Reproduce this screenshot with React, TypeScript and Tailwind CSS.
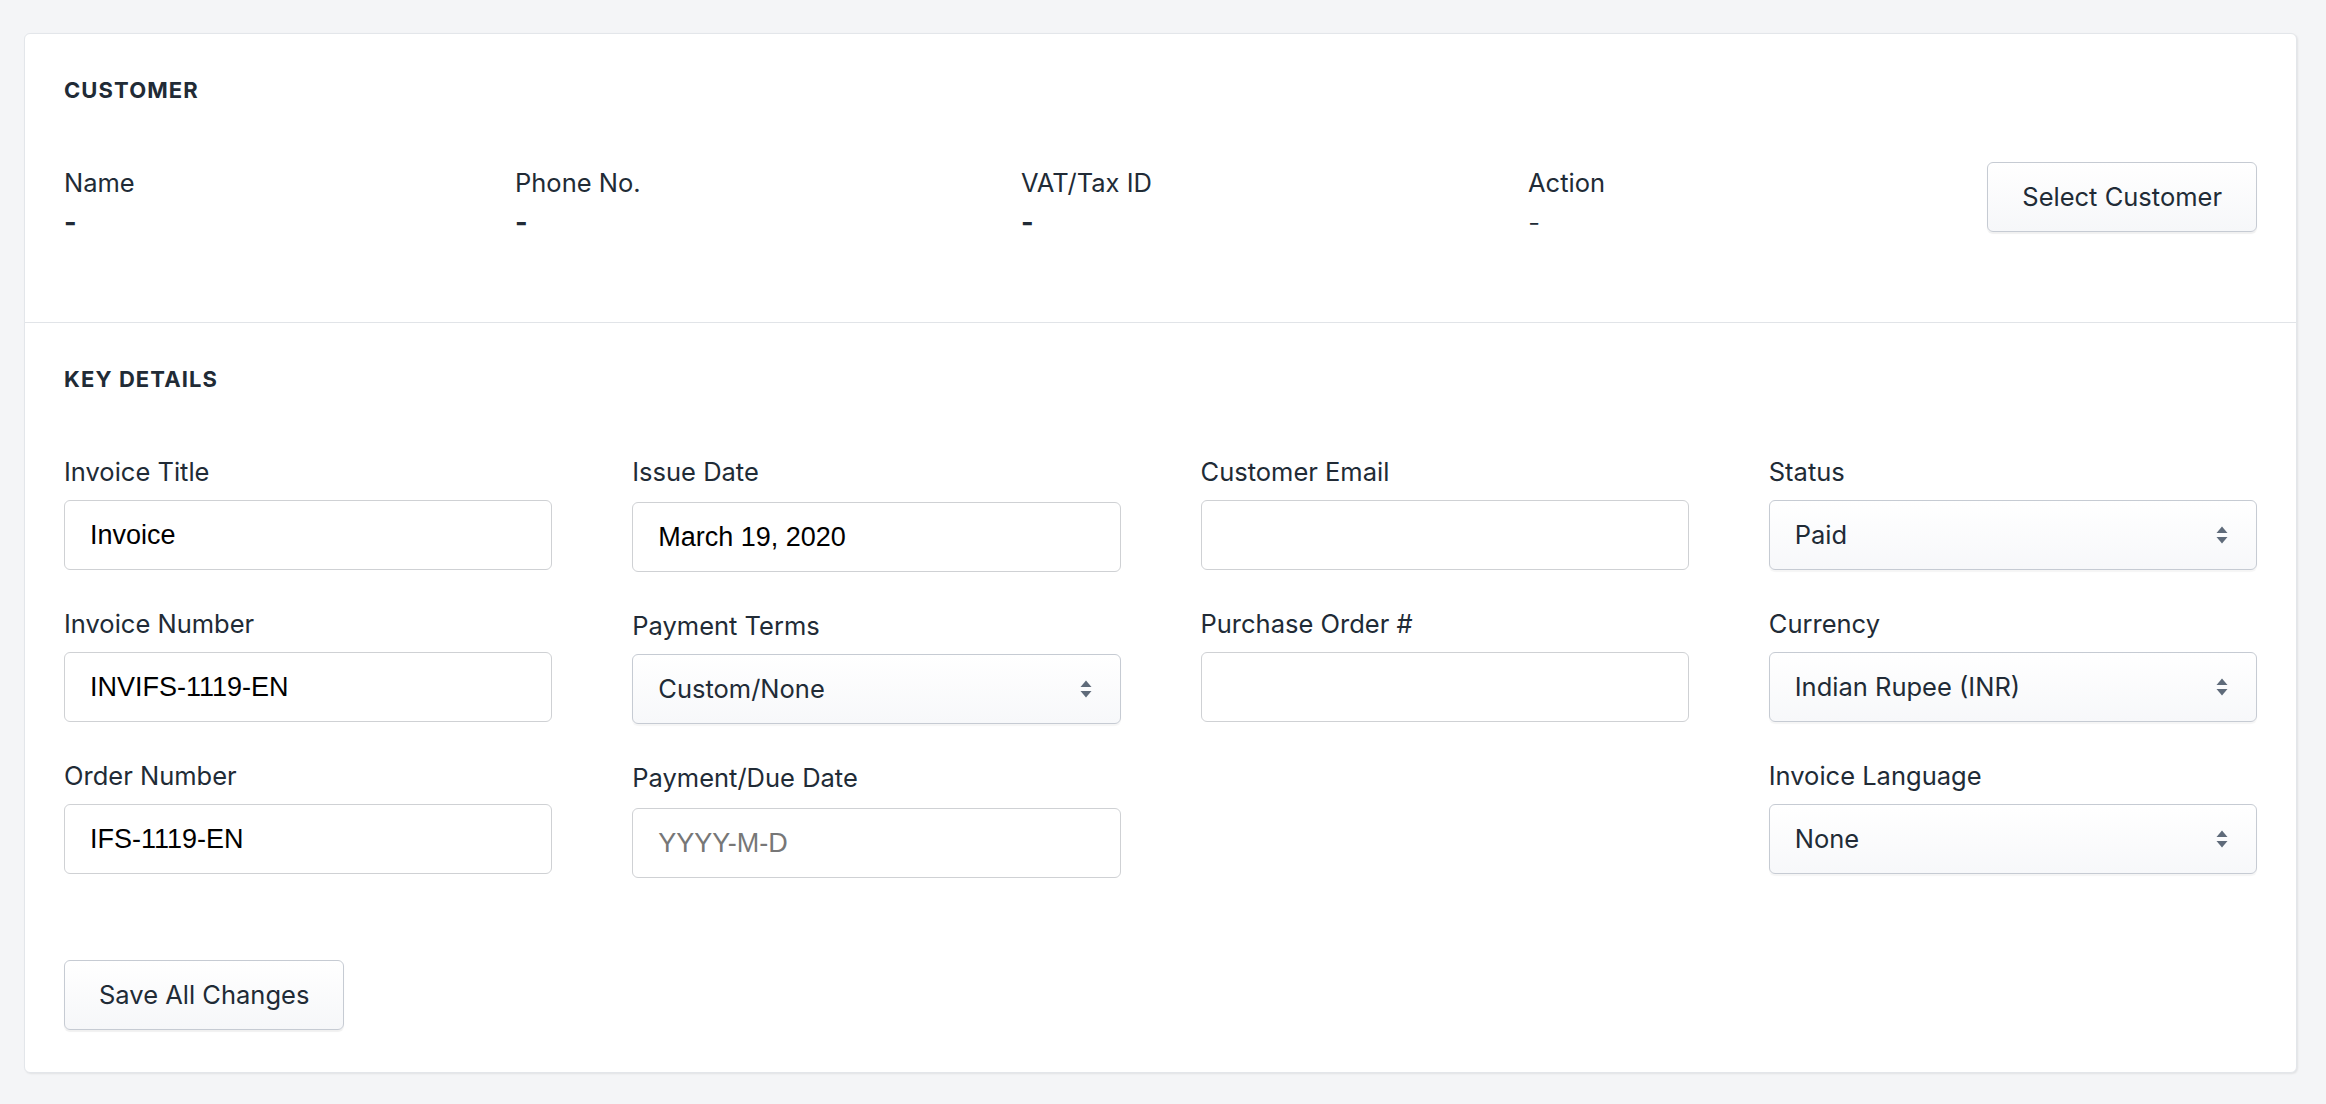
import React from 'react'

const label = 'block text-[25.5px] leading-[32px] text-[#212b36] mb-3'
const inputCls =
  'w-full h-[70px] rounded-[6px] border border-[#cfd1d4] bg-white px-[25px] text-[27px] text-black placeholder:text-[#777] outline-none'
const fontSans = { fontFamily: 'Inter, "Noto Sans", sans-serif' }
const fontInput = { fontFamily: '"Liberation Sans", Arial, sans-serif' }

function Chevrons() {
  return (
    <svg width="12" height="20" viewBox="0 0 12 20" className="shrink-0">
      <path d="M6 1.5 L11.5 8 L0.5 8 Z" fill="#5f6b7a" />
      <path d="M0.5 12 L11.5 12 L6 18.5 Z" fill="#5f6b7a" />
    </svg>
  )
}

function TextField({ title, value, placeholder, date }: { title: string; value?: string; placeholder?: string; date?: boolean }) {
  return (
    <div>
      <label className={label}>{title}</label>
      <input
        className={inputCls + (date ? ' mt-[2px]' : '')}
        style={fontInput}
        defaultValue={value}
        placeholder={placeholder}
      />
    </div>
  )
}

function SelectField({ title, value }: { title: string; value: string }) {
  return (
    <div>
      <label className={label}>{title}</label>
      <div className="flex h-[70px] items-center justify-between rounded-[6px] border border-[#c6cbd3] bg-gradient-to-b from-white to-[#f7f8fa] pl-[25px] pr-[28px] shadow-[0_2px_1px_rgba(0,0,0,0.04)]">
        <span className="text-[25.5px] text-[#212b36]">{value}</span>
        <Chevrons />
      </div>
    </div>
  )
}

function Button({ children }: { children: React.ReactNode }) {
  return (
    <button className="h-[70px] rounded-[6px] border border-[#c6cbd3] bg-gradient-to-b from-white to-[#f6f7f9] px-[34px] text-[25.5px] text-[#212b36] shadow-[0_2px_1px_rgba(0,0,0,0.06)]">
      {children}
    </button>
  )
}

function CustomerInfo({ title, strong, className }: { title: string; strong: boolean; className: string }) {
  return (
    <div className={className + ' pt-[5px]'}>
      <div className="text-[25.5px] leading-[32px] text-[#212b36]">{title}</div>
      <div className={'mt-[4px] text-[27px] leading-[40px] text-[#212b36] ' + (strong ? 'font-bold' : 'font-light')}>-</div>
    </div>
  )
}

export default function App() {
  return (
    <div className="min-h-screen bg-[#f4f5f7] pl-6 pr-[29px] pt-[33px]" style={fontSans}>
      <div className="rounded-[6px] border border-[#e3e6ea] bg-white shadow-[1px_1px_2px_rgba(0,0,0,0.08)]">
        {/* Customer */}
        <section className="px-[39px] pt-[42px] pb-[79px] border-b border-[#e1e4e8]">
          <h2 className="text-[22px] leading-[28px] font-bold tracking-[0.05em] text-[#212b36]">CUSTOMER</h2>
          <div className="mt-[58px] flex items-start">
            <CustomerInfo title="Name" strong className="w-[451px]" />
            <CustomerInfo title="Phone No." strong className="w-[506px]" />
            <CustomerInfo title="VAT/Tax ID" strong className="w-[507px]" />
            <CustomerInfo title="Action" strong={false} className="flex-1" />
            <Button>Select Customer</Button>
          </div>
        </section>

        {/* Key details */}
        <section className="px-[39px] pt-[42px] pb-[42px]">
          <h2 className="text-[22px] leading-[28px] font-bold tracking-[0.05em] text-[#212b36]">KEY DETAILS</h2>
          <div className="mt-[63px] grid grid-cols-4 gap-x-[80px] items-start">
            <div className="flex flex-col gap-[38px]">
              <TextField title="Invoice Title" value="Invoice" />
              <TextField title="Invoice Number" value="INVIFS-1119-EN" />
              <TextField title="Order Number" value="IFS-1119-EN" />
            </div>
            <div className="flex flex-col gap-[38px]">
              <TextField title="Issue Date" value="March 19, 2020" date />
              <SelectField title="Payment Terms" value="Custom/None" />
              <TextField title="Payment/Due Date" placeholder="YYYY-M-D" date />
            </div>
            <div className="flex flex-col gap-[38px]">
              <TextField title="Customer Email" />
              <TextField title="Purchase Order #" />
            </div>
            <div className="flex flex-col gap-[38px]">
              <SelectField title="Status" value="Paid" />
              <SelectField title="Currency" value="Indian Rupee (INR)" />
              <SelectField title="Invoice Language" value="None" />
            </div>
          </div>
          <div className="mt-[82px]">
            <Button>Save All Changes</Button>
          </div>
        </section>
      </div>
    </div>
  )
}
